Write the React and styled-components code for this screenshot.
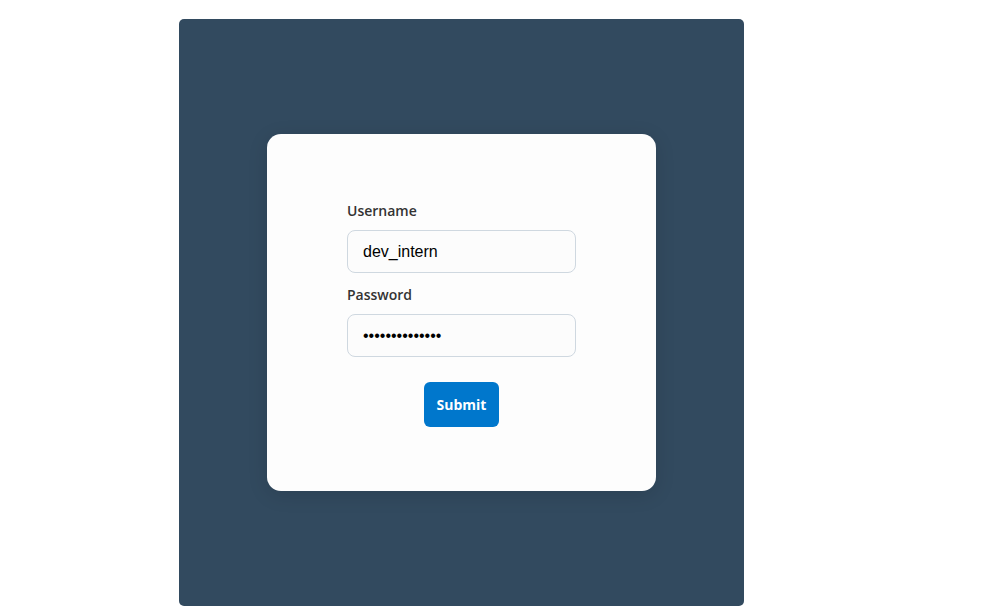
import styled, { createGlobalStyle } from "styled-components";

const GlobalStyle = createGlobalStyle`
  body {
    margin: 0;
    background: #ffffff;
    font-family: "Open Sans", "Noto Sans", sans-serif;
  }
`;

const App = () => {
  return (
    <>
      <GlobalStyle />
      <Page>
        <Panel>
          <Card>
            <Form onSubmit={(e) => e.preventDefault()}>
              <Label htmlFor="username">Username</Label>
              <Input id="username" type="text" defaultValue="dev_intern" />
              <Label htmlFor="password" $spaced>Password</Label>
              <Input id="password" type="password" defaultValue="supersecret123" />
              <Button type="submit">Submit</Button>
            </Form>
          </Card>
        </Panel>
      </Page>
    </>
  )
};

const Page = styled.div`
  padding: 19px 0 8px 179px;
`;

const Panel = styled.div`
  width: 565px;
  height: 587px;
  background-color: #324a5f;
  border-radius: 5px;
  display: flex;
  align-items: center;
  justify-content: center;
`;

const Card = styled.div`
  width: 389px;
  height: 357px;
  box-sizing: border-box;
  background-color: #fdfdfd;
  border-radius: 14px;
  box-shadow: 0 4px 20px rgba(0, 0, 0, 0.12);
  display: flex;
  align-items: center;
  padding: 3px 80px 0;
`;

const Form = styled.form`
  display: flex;
  flex-direction: column;
  width: 100%;
`;

const Label = styled.label`
  font-size: 14px;
  font-weight: 600;
  line-height: 20px;
  color: #333333;
  margin-top: ${({ $spaced }) => ($spaced ? "12px" : "0")};
  margin-bottom: 9px;
`;

const Input = styled.input`
  box-sizing: border-box;
  width: 229px;
  height: 43px;
  padding: 0 15px;
  border: 1px solid #cfd8e0;
  border-radius: 8px;
  background-color: #fcfcfc;
  font-family: "Liberation Sans", Arial, sans-serif;
  font-size: 16px;
  color: #000000;
  outline: none;
`;

const Button = styled.button`
  align-self: center;
  margin-top: 25px;
  width: 75px;
  height: 45px;
  padding: 0;
  border: none;
  border-radius: 6px;
  background-color: #0077cc;
  color: #ffffff;
  font-family: "Open Sans", "Noto Sans", sans-serif;
  font-size: 14px;
  font-weight: 700;
  cursor: pointer;
`;

export default App;
